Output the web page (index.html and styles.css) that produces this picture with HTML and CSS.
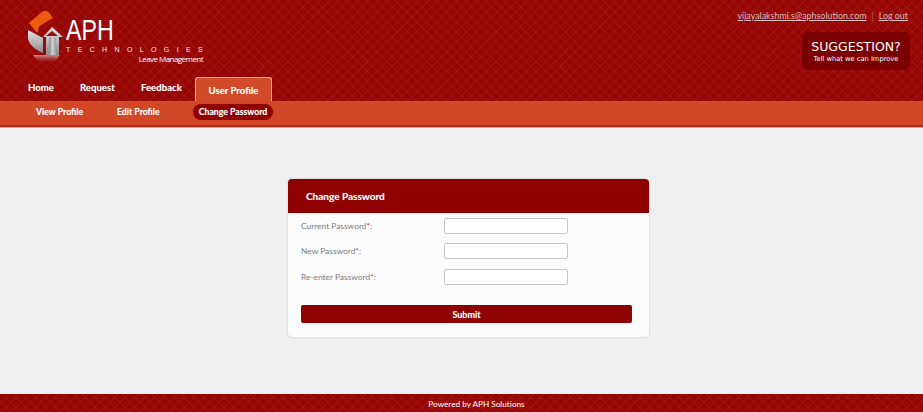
FILE: index.html
```html
<!DOCTYPE html>
<html lang="en">
<head>
<meta charset="utf-8">
<title>Change Password</title>
<link rel="stylesheet" href="styles.css">
</head>
<body>
<header class="header pattern">
  <div class="header-left">
    <div class="logo">
      <svg class="logo-icon" width="38" height="52" viewBox="0 0 38 52">
        <defs>
          <linearGradient id="grey" x1="0" y1="0" x2="0" y2="1">
            <stop offset="0" stop-color="#e4e4e4"/>
            <stop offset="1" stop-color="#8a8a8a"/>
          </linearGradient>
          <linearGradient id="door" x1="0" y1="0" x2="1" y2="0">
            <stop offset="0" stop-color="#8d8d8d"/>
            <stop offset=".5" stop-color="#cfcfcf"/>
            <stop offset="1" stop-color="#9a9a9a"/>
          </linearGradient>
          <linearGradient id="fade" x1="0" y1="0" x2="0" y2="1">
            <stop offset="0" stop-color="#d9b0b0" stop-opacity=".75"/>
            <stop offset="1" stop-color="#c08080" stop-opacity="0"/>
          </linearGradient>
        </defs>
        <path d="M2 13 L15 2 Q18 0 20 1 Q24 4 26 8 L14 15 Q11 17 11 21 L10 23 Z" fill="#f05a10"/>
        <path d="M1 20 L16 28 V43 Q9 40 6 37 Q1 32 1 28 Z" fill="url(#grey)"/>
        <path d="M25 17 L36 27 H32 V45 H19 V27 H16 Z" fill="url(#grey)"/>
        <path d="M25 21 L31 26 H19 Z" fill="#a00d0d"/>
        <path d="M22 28 H29 V45 H22 Z" fill="url(#door)"/>
        <path d="M6 45 H33 L28 52 H11 Z" fill="url(#fade)"/>
      </svg>
      <div class="logo-text">
        <div class="logo-name">APH</div>
        <div class="logo-tech">TECHNOLOGIES</div>
        <div class="logo-sub">Leave Management</div>
      </div>
    </div>
    <nav class="nav">
      <a class="nav-item nav-home">Home</a>
      <a class="nav-item nav-request">Request</a>
      <a class="nav-item nav-feedback">Feedback</a>
      <a class="nav-item nav-active">User Profile</a>
    </nav>
  </div>
  <div class="header-right">
    <div class="userline">
      <a class="userlink">vijayalakshmi.s@aphsolution.com</a>
      <span class="sep">|</span>
      <a class="userlink">Log out</a>
    </div>
    <div class="suggest">
      <div class="suggest-title">SUGGESTION?</div>
      <div class="suggest-sub">Tell what we can Improve</div>
    </div>
  </div>
</header>
<div class="subnav">
  <a class="sub-item sub-view">View Profile</a>
  <a class="sub-item sub-edit">Edit Profile</a>
  <a class="sub-item sub-active">Change Password</a>
</div>
<main class="main">
  <section class="card">
    <h2 class="card-head">Change Password</h2>
    <form class="form">
      <div class="row"><label class="label">Current Password<span class="req">*</span>:</label><input class="input" type="password"></div>
      <div class="row"><label class="label">New Password<span class="req">*</span>:</label><input class="input" type="password"></div>
      <div class="row"><label class="label">Re-enter Password<span class="req">*</span>:</label><input class="input" type="password"></div>
      <button class="submit" type="button">Submit</button>
    </form>
  </section>
</main>
<footer class="footer pattern">Powered by APH Solutions</footer>
</body>
</html>
```
FILE: styles.css
```css
* { box-sizing: border-box; }
html, body { height: 100%; }
body {
  margin: 0;
  height: 412px;
  overflow: hidden;
  display: flex;
  flex-direction: column;
  background: #f0f0f0;
  font-family: Lato, "Open Sans", sans-serif;
  font-size: 9px;
  color: #fff;
}
.pattern {
  background-color: #980505;
  background-image:
    repeating-linear-gradient(45deg, rgba(255,255,255,.035) 0 1.5px, transparent 1.5px 7px),
    repeating-linear-gradient(-45deg, rgba(255,255,255,.035) 0 1.5px, transparent 1.5px 7px);
}
.header {
  height: 101px;
  flex: none;
  display: flex;
  justify-content: space-between;
}
.header-left { display: flex; flex-direction: column; }
.logo {
  display: flex;
  align-items: flex-start;
  height: 77px;
  padding: 10px 0 0 27px;
}
.logo-icon { flex: none; }
.logo-text {
  width: 137px;
  margin-left: 1px;
  padding-top: 6px;
  display: flex;
  flex-direction: column;
}
.logo-name {
  font-family: "Liberation Sans", sans-serif;
  font-size: 29px;
  line-height: 29px;
  height: 29px;
  font-weight: 400;
  transform: scaleX(.8);
  transform-origin: left center;
}
.logo-tech {
  font-family: "Liberation Sans", sans-serif;
  font-size: 7px;
  line-height: 8px;
  margin-top: 1px;
  letter-spacing: 7.37px;
  white-space: nowrap;
  color: #f5e4e4;
}
.logo-sub {
  font-family: "Open Sans", sans-serif;
  font-size: 8px;
  line-height: 9px;
  letter-spacing: -.55px;
  text-align: right;
  white-space: nowrap;
  color: #fff;
}
.nav { display: flex; height: 24px; align-items: stretch; padding-left: 28px; }
.nav-item {
  font-size: 9.6px;
  font-weight: 700;
  line-height: 24px;
  margin-top: -1px;
  white-space: nowrap;
  text-shadow: 0 0 1px rgba(255,255,255,.35);
}
.nav-home { width: 52px; }
.nav-request { width: 61px; }
.nav-feedback { width: 54px; }
.nav-active {
  width: 77px;
  margin-top: 0;
  text-align: center;
  line-height: 25px;
  background: #d24a28;
  border: 1px solid #e9b3a3;
  border-bottom: 0;
  border-radius: 3px 3px 0 0;
}
.header-right {
  display: flex;
  flex-direction: column;
  align-items: flex-end;
  padding: 10px 15px 0 0;
}
.userline {
  display: flex;
  gap: 5px;
  line-height: 12px;
  font-size: 8.9px;
  color: #c99a9a;
}
.userlink { color: #d8bcbc; text-decoration: underline; }
.sep { color: #b56a6a; }
.suggest {
  margin: 10px -2px 0 0;
  width: 108px;
  height: 38px;
  background: #7a0000;
  border-radius: 6px;
  text-align: center;
  padding-top: 7px;
}
.suggest-title {
  font-family: "DejaVu Sans", sans-serif;
  font-size: 12.5px;
  line-height: 15px;
}
.suggest-sub {
  font-family: "DejaVu Sans", sans-serif;
  font-size: 6.7px;
  line-height: 10px;
}
.subnav {
  height: 26px;
  flex: none;
  display: flex;
  align-items: center;
  padding: 0 0 2px 36px;
  background: #d24726;
  border-bottom: 2px solid #a8301a;
  box-shadow: 0 1px 0 #9fb0b0;
}
.sub-item {
  font-size: 8.7px;
  font-weight: 700;
  line-height: 16px;
  white-space: nowrap;
  text-shadow: 0 0 1px rgba(255,255,255,.35);
}
.sub-view { width: 81px; }
.sub-edit { width: 76px; }
.sub-active {
  width: 80px;
  text-align: center;
  background: #8f0000;
  border-radius: 8px;
}
.main {
  flex: 1;
  display: flex;
  justify-content: center;
  align-items: flex-start;
  padding: 52px 0 0 14px;
}
.card {
  width: 361px;
  height: 158px;
  background: #fcfcfc;
  border-radius: 4px;
  box-shadow: 0 0 2px rgba(0,0,0,.25);
}
.card-head {
  margin: 0;
  height: 34px;
  padding-left: 18px;
  background: #8f0000;
  border-radius: 4px 4px 0 0;
  font-size: 10px;
  font-weight: 700;
  line-height: 34px;
  text-shadow: 0 0 1px rgba(255,255,255,.35);
}
.form { display: flex; flex-direction: column; padding: 0 17px 0 13px; }
.row {
  display: flex;
  align-items: center;
  height: 25.5px;
}
.label {
  width: 143px;
  font-size: 8.4px;
  color: #7d7d7d;
}
.req { color: #e02020; }
.input {
  width: 124px;
  height: 16px;
  padding: 0;
  background: #fff;
  border: 1px solid #c6c6c6;
  border-radius: 2px;
}
.submit {
  margin-top: 15.5px;
  height: 18px;
  padding: 0;
  border: 0;
  border-radius: 2px;
  background: #8f0000;
  color: #fff;
  font-family: inherit;
  font-size: 9px;
  font-weight: 700;
  text-shadow: 0 0 1px rgba(255,255,255,.35);
}
.footer {
  height: 18px;
  flex: none;
  text-align: center;
  font-size: 8.2px;
  line-height: 20px;
  padding-left: 30px;
}
```
